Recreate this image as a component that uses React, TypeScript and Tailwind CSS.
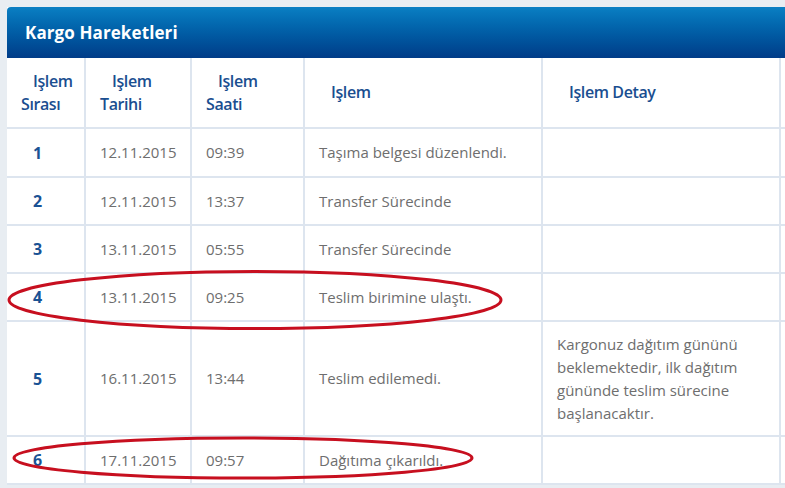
import { FC } from "react";

type Row = {
  no: string;
  date: string;
  time: string;
  action: string;
  detail?: string;
  tall?: boolean;
};

const rows: Row[] = [
  { no: "1", date: "12.11.2015", time: "09:39", action: "Taşıma belgesi düzenlendi." },
  { no: "2", date: "12.11.2015", time: "13:37", action: "Transfer Sürecinde" },
  { no: "3", date: "13.11.2015", time: "05:55", action: "Transfer Sürecinde" },
  { no: "4", date: "13.11.2015", time: "09:25", action: "Teslim birimine ulaştı." },
  {
    no: "5",
    date: "16.11.2015",
    time: "13:44",
    action: "Teslim edilemedi.",
    detail: "Kargonuz dağıtım gününü beklemektedir, ilk dağıtım gününde teslim sürecine başlanacaktır.",
    tall: true,
  },
  { no: "6", date: "17.11.2015", time: "09:57", action: "Dağıtıma çıkarıldı." },
];

const cell = "flex items-center border-r-2 border-b-2 border-[#dde5ef] pl-[14px] pr-[14px]";

const HeadCell: FC<{ top: string; bottom?: string }> = ({ top, bottom }) => (
  <div className={`${cell} h-[71px] text-[16px] font-semibold tracking-[-0.4px] leading-[23px] text-[#1a4e90]`}>
    <div>
      <div className="indent-[12px]">{top}</div>
      {bottom && <div>{bottom}</div>}
    </div>
  </div>
);

export default function App() {
  return (
    <div
      className="relative w-[785px] h-[488px] overflow-hidden bg-[#e8edf2] pt-[7px] pl-[7px]"
      style={{ fontFamily: '"Open Sans", "Noto Sans", sans-serif' }}
    >
      <div className="w-[820px] bg-white">
        <div className="flex items-center h-[51px] rounded-tl-[4px] bg-gradient-to-b from-[#0a7fc3] to-[#013c88] px-[18px]">
          <span className="text-[17px] font-bold tracking-[0.1px] text-white">Kargo Hareketleri</span>
        </div>

        <div className="grid grid-cols-[79px_106px_113px_238px_238px_46px]">
          <HeadCell top="Işlem" bottom="Sırası" />
          <HeadCell top="Işlem" bottom="Tarihi" />
          <HeadCell top="Işlem" bottom="Saati" />
          <HeadCell top="Işlem" />
          <HeadCell top="Işlem Detay" />
          <div className={`${cell} h-[71px]`} />

          {rows.map((r) => {
            const h = r.tall ? "h-[115px]" : r.no === "1" ? "h-[49px]" : "h-[48px]";
            return [
              <div key={r.no + "a"} className={`${cell} ${h} pl-[26px] text-[16px] font-bold text-[#1a5294]`}>
                {r.no}
              </div>,
              <div key={r.no + "b"} className={`${cell} ${h} pl-[13px] text-[15px] text-[#6e6e6e]`}>
                {r.date}
              </div>,
              <div key={r.no + "c"} className={`${cell} ${h} pl-[13px] text-[15px] text-[#6e6e6e]`}>
                {r.time}
              </div>,
              <div key={r.no + "d"} className={`${cell} ${h} text-[15px] text-[#6e6e6e]`}>
                {r.action}
              </div>,
              <div key={r.no + "e"} className={`${cell} ${h} text-[15px] leading-[23px] text-[#6e6e6e]`}>
                {r.detail}
              </div>,
              <div key={r.no + "f"} className={`${cell} ${h}`} />,
            ];
          })}
        </div>
      </div>

      <svg className="absolute left-0 top-0 pointer-events-none" width="785" height="488" viewBox="0 0 785 488">
        <ellipse cx="255" cy="300" rx="246" ry="28.5" fill="none" stroke="#c70f1f" strokeWidth="3" />
        <ellipse cx="243" cy="458" rx="229" ry="20" fill="none" stroke="#c70f1f" strokeWidth="3" />
      </svg>
    </div>
  );
}
